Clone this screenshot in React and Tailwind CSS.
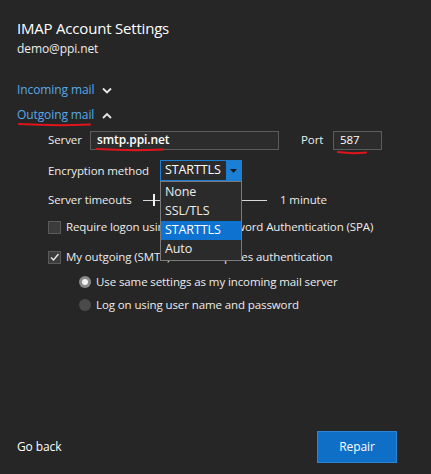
import { useState } from "react";

const font = { fontFamily: '"Open Sans", "Noto Sans", sans-serif' };

function Chevron({ up }) {
  return (
    <svg width="10" height="7" viewBox="0 0 10 7" className="ml-[8px]">
      <path
        d={up ? "M1 6 L5 2 L9 6" : "M1 1.5 L5 5.5 L9 1.5"}
        fill="none"
        stroke="#e8e8e8"
        strokeWidth="1.8"
      />
    </svg>
  );
}

function RedLine({ className, width }) {
  return (
    <svg
      className={`absolute pointer-events-none ${className}`}
      width={width}
      height="5"
      viewBox={`0 0 ${width} 5`}
    >
      <path
        d={`M1 2 Q ${width / 2} 4 ${width - 1} 2.5`}
        fill="none"
        stroke="#e0141b"
        strokeWidth="2"
        strokeLinecap="round"
      />
    </svg>
  );
}

function Checkbox({ checked, children }) {
  return (
    <div className="flex items-center h-[18px]">
      <div className="w-[13px] h-[13px] bg-[#3c3c3c] border border-[#5a5a5a] flex items-center justify-center">
        {checked && (
          <svg width="11" height="11" viewBox="0 0 11 11">
            <path d="M2 5.5 L4.5 8 L9.5 2" fill="none" stroke="#e6e6e6" strokeWidth="1.5" />
          </svg>
        )}
      </div>
      <span className="ml-[5px]">{children}</span>
    </div>
  );
}

function Radio({ checked, children }) {
  return (
    <div className="flex items-center h-[18px]">
      <div
        className={`w-[12px] h-[12px] rounded-full flex items-center justify-center ${
          checked ? "bg-[#8a8a8a]" : "bg-[#4a4a4a]"
        }`}
      >
        {checked && <div className="w-[6px] h-[6px] rounded-full bg-[#f2f2f2]" />}
      </div>
      <span className="ml-[5px]">{children}</span>
    </div>
  );
}

export default function App() {
  const [method] = useState("STARTTLS");
  const options = ["None", "SSL/TLS", "STARTTLS", "Auto"];

  return (
    <div
      className="w-[431px] h-[474px] bg-[#262626] text-[#ececec] text-[11.5px] tracking-[-0.1px] flex flex-col relative overflow-hidden"
      style={font}
    >
      <div className="pl-[17px] pt-[16px] flex flex-col">
        <h1 className="text-[15px] leading-[24px] tracking-[-0.2px] text-white">IMAP Account Settings</h1>
        <div className="text-[12px] leading-[18px]">demo@ppi.net</div>

        <button className="mt-[23px] flex items-center h-[18px] text-[12px] text-[#59a8e8]">
          Incoming mail
          <Chevron />
        </button>
        <button className="mt-[7px] flex items-center h-[18px] text-[12px] text-[#59a8e8] relative">
          Outgoing mail
          <Chevron up />
          <RedLine className="left-[1px] top-[16px]" width={73} />
        </button>
      </div>

      <div className="pl-[48px] flex flex-col">
        <div className="mt-[6px] flex items-center h-[20px]">
          <span className="w-[42px]">Server</span>
          <div className="relative w-[189px] h-[19px] bg-[#2c2c2c] border border-[#5c5c5c] flex items-center pl-[6px] text-[12px] font-semibold text-white">
            smtp.ppi.net
            <RedLine className="left-[5px] top-[15px]" width={68} />
          </div>
          <span className="ml-[22px] w-[32px]">Port</span>
          <div className="relative w-[49px] h-[19px] bg-[#2c2c2c] border border-[#5c5c5c] flex items-center pl-[6px] text-white">
            587
            <RedLine className="left-[3px] top-[18px]" width={30} />
          </div>
        </div>

        <div className="mt-[10px] flex items-center h-[21px]">
          <span className="w-[112px]">Encryption method</span>
          <div className="relative">
            <div className="w-[82px] h-[21px] border border-[#1b7fd6] bg-[#2b2b2b] flex items-center">
              <span className="pl-[4px] flex-1 text-[12.5px] text-white">{method}</span>
              <div className="w-[15px] h-full bg-[#1b7fd6] flex items-center justify-center">
                <svg width="7" height="4" viewBox="0 0 7 4">
                  <path d="M0 0 L7 0 L3.5 4 Z" fill="#1a1a1a" />
                </svg>
              </div>
            </div>
            <div className="absolute left-0 top-[21px] w-[82px] bg-[#2b2b2b] border border-[#7a7a7a] z-10 flex flex-col py-[1px]">
              {options.map((o) => (
                <div
                  key={o}
                  className={`h-[19px] flex items-center pl-[4px] text-[12.5px] ${
                    o === method ? "bg-[#0e73d0] text-white" : "text-[#ececec]"
                  }`}
                >
                  {o}
                </div>
              ))}
            </div>
          </div>
        </div>

        <div className="mt-[10px] flex items-center h-[18px]">
          <span className="w-[95px]">Server timeouts</span>
          <div className="relative w-[124px] h-[12px] flex items-center">
            <div className="w-full h-[1px] bg-[#d8d8d8]" />
            <div className="absolute left-[10px] top-0 w-[2px] h-[12px] bg-[#f0f0f0]" />
          </div>
          <span className="ml-[13px]">1 minute</span>
        </div>

        <div className="mt-[9px]">
          <Checkbox>Require logon using Secure Password Authentication (SPA)</Checkbox>
        </div>
        <div className="mt-[12px]">
          <Checkbox checked>My outgoing (SMTP) server requires authentication</Checkbox>
        </div>

        <div className="pl-[31px] flex flex-col">
          <div className="mt-[7px]">
            <Radio checked>Use same settings as my incoming mail server</Radio>
          </div>
          <div className="mt-[5px]">
            <Radio>Log on using user name and password</Radio>
          </div>
        </div>
      </div>

      <div className="mt-auto pb-[11px] pl-[17px] pr-[34px] flex items-center justify-between">
        <button className="text-[12px] text-white">Go back</button>
        <button className="w-[80px] h-[32px] bg-[#0f6fc6] border border-[#2b84d6] text-[12px] text-white">
          Repair
        </button>
      </div>
    </div>
  );
}
